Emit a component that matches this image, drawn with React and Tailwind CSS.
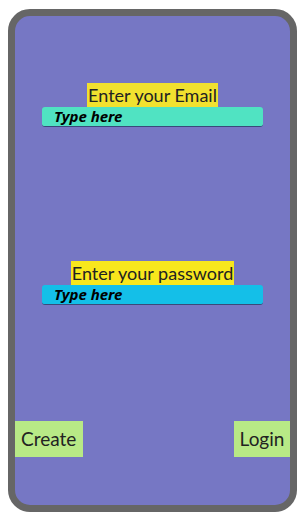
const Field = ({ label, color, labelColor, type }) => {
  return (
    <div className="flex flex-col items-center">
      <span className={`h-[24px] leading-[25px] text-[18px] text-[#222] px-[1px] ${labelColor}`}>
        {label}
      </span>
      <input
        type={type}
        placeholder="Type here"
        className={`w-[221px] h-[20px] rounded-[3px] border-b border-[#3a4a7a] px-[12px] text-[15px] font-bold italic text-black outline-none placeholder:text-black ${color}`}
        style={{ fontFamily: '"Noto Sans", sans-serif' }}
      />
    </div>
  );
};

const App = () => {
  return (
    <div className="pt-[9px] pl-[8px] bg-white min-h-[518px]" style={{ fontFamily: 'Lato, "Noto Sans", sans-serif' }}>
      <div className="w-[289px] h-[503px] border-[7px] border-[#666666] rounded-[22px] bg-[#7677c4] flex flex-col">
        {/* Email */}
        <div className="mt-[67px]">
          <Field label="Enter your Email" labelColor="bg-[#f1e12f]" color="bg-[#50e3c2]" type="email" />
        </div>

        {/* Password */}
        <div className="mt-[134px]">
          <Field label="Enter your password" labelColor="bg-[#f8e71c]" color="bg-[#14bfe8]" type="password" />
        </div>

        {/* Buttons */}
        <div className="mt-auto mb-[48px] flex justify-between">
          <button className="w-[68px] h-[36px] pl-[6px] text-left bg-[#b8e986] text-[19px] text-[#222]">Create</button>
          <button className="w-[56px] h-[36px] bg-[#b8e986] text-[19px] text-[#222]">Login</button>
        </div>
      </div>
    </div>
  );
};

export default App;
